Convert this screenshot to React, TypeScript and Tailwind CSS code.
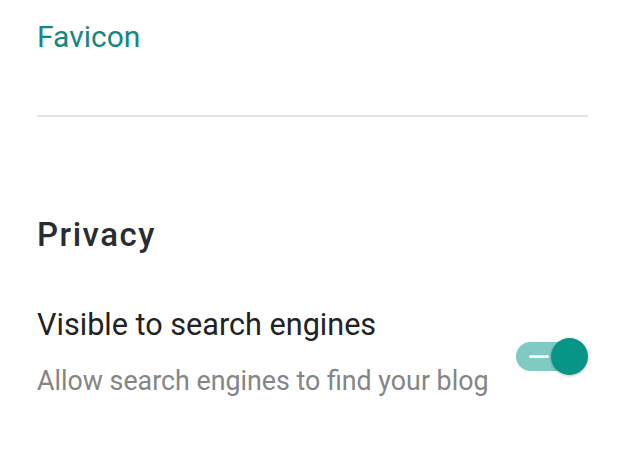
import React from "react";

function Toggle() {
  return (
    <div className="flex items-center">
      <div className="w-[58px] h-[29px] rounded-full bg-[#7fcac2] flex items-center pl-[13px]">
        <div className="w-[20px] h-[3px] rounded-full bg-white/90" />
      </div>
      <div className="-ml-[23px] w-[37px] h-[37px] rounded-full bg-[#069587] shadow-[0_1px_3px_rgba(0,0,0,0.25)]" />
    </div>
  );
}

export default function App() {
  return (
    <div className="w-[639px] h-[454px] bg-white overflow-hidden" style={{ fontFamily: "Roboto, 'Noto Sans', sans-serif" }}>
      <div className="pl-[37px] pr-[51px] pt-[17px]">
        <div className="text-[30px] leading-[40px] text-[#16877f]">Favicon</div>
        <div className="mt-[58px] h-[2px] bg-[#e4e4e4]" />
        <div className="mt-[98px] text-[33px] leading-[40px] font-medium tracking-[0.045em] text-[#2a2d30]">Privacy</div>
        <div className="mt-[52px] flex items-center">
          <div className="flex-1">
            <div className="text-[30.6px] leading-[36px] text-[#222]">Visible to search engines</div>
            <div className="mt-[23px] text-[26.8px] leading-[30px] text-[#858585]">Allow search engines to find your blog</div>
          </div>
          <div className="mt-[10px]">
            <Toggle />
          </div>
        </div>
      </div>
    </div>
  );
}
